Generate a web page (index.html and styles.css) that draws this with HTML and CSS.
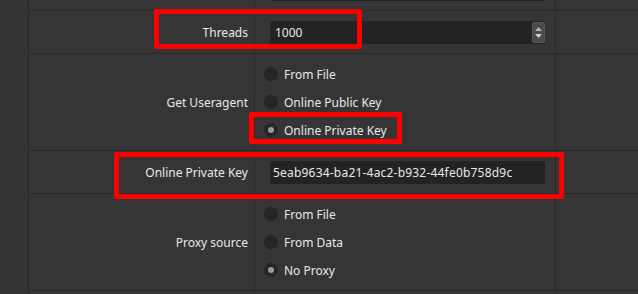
FILE: index.html
```html
<!DOCTYPE html>
<html>
<head>
<meta charset="utf-8">
<link rel="stylesheet" href="styles.css">
</head>
<body>
<div class="app">
  <div class="side"></div>
  <div class="table">
    <div class="row short first">
      <div class="label"></div>
      <div class="value"><div class="field"></div></div>
      <div class="extra"></div>
    </div>
    <div class="row short">
      <div class="label">Threads</div>
      <div class="value">
        <div class="field spin">
          <span class="text">1000</span>
          <div class="spinbtn">
            <svg width="13" height="21" viewBox="0 0 13 21">
              <path d="M3 9 L6.5 5 L10 9 Z" fill="#bcaebc"/>
              <path d="M3 12 L6.5 16 L10 12 Z" fill="#d2d2d2"/>
            </svg>
          </div>
        </div>
      </div>
      <div class="extra"></div>
    </div>
    <div class="row tall">
      <div class="label">Get Useragent</div>
      <div class="value">
        <div class="radios">
          <div class="radio"><span class="dot"></span><span>From File</span></div>
          <div class="radio"><span class="dot"></span><span>Online Public Key</span></div>
          <div class="radio"><span class="dot on"></span><span>Online Private Key</span></div>
        </div>
      </div>
      <div class="extra"></div>
    </div>
    <div class="row short">
      <div class="label">Online Private Key</div>
      <div class="value"><div class="field"><span class="text key">5eab9634-ba21-4ac2-b932-44fe0b758d9c</span></div></div>
      <div class="extra"></div>
    </div>
    <div class="row tall">
      <div class="label">Proxy source</div>
      <div class="value">
        <div class="radios">
          <div class="radio"><span class="dot"></span><span>From File</span></div>
          <div class="radio"><span class="dot"></span><span>From Data</span></div>
          <div class="radio"><span class="dot on"></span><span>No Proxy</span></div>
        </div>
      </div>
      <div class="extra"></div>
    </div>
    <div class="row short">
      <div class="label"></div>
      <div class="value"></div>
      <div class="extra"></div>
    </div>
  </div>
  <div class="mark mark-threads"></div>
  <div class="mark mark-radio"></div>
  <div class="mark mark-key"></div>
</div>
</body>
</html>
```
FILE: styles.css
```css
html, body {
  margin: 0;
  padding: 0;
  background: #353535;
  overflow: hidden;
}
.app {
  position: relative;
  width: 638px;
  height: 294px;
  display: flex;
  overflow: hidden;
  font-family: "Noto Sans", "Open Sans", sans-serif;
  font-size: 12px;
  color: #e8e8e8;
}
.side {
  width: 29px;
  flex: none;
  box-sizing: border-box;
  border-right: 1px solid #282828;
  background-color: #333333;
  background-image: radial-gradient(circle, #383838 0.6px, transparent 0.7px);
  background-size: 3px 3px;
}
.table {
  flex: 1;
  display: flex;
  flex-direction: column;
}
.row {
  display: grid;
  grid-template-columns: 226px 301px 1fr;
  box-sizing: border-box;
  border-bottom: 1px solid #2a2a2a;
  flex: none;
}
.row.first {
  margin-top: -32px;
}
.short { height: 43px; }
.tall { height: 97px; }
.label, .value {
  box-sizing: border-box;
  border-right: 1px solid #2a2a2a;
}
.label {
  display: flex;
  align-items: center;
  justify-content: flex-end;
  padding-right: 6px;
}
.value {
  display: flex;
  align-items: center;
}
.field {
  margin-left: 15px;
  width: 275px;
  height: 23px;
  background: #232323;
  border-radius: 3px;
  display: flex;
  align-items: center;
  box-sizing: border-box;
  padding-left: 3px;
}
.field .text {
  flex: 1;
}
.field .key {
  letter-spacing: 0.2px;
}
.spin {
  padding-left: 5px;
}
.spinbtn {
  width: 13px;
  height: 21px;
  box-sizing: border-box;
  border: 1px solid #5a5a5a;
  border-radius: 2px;
  background-color: #4a4a4a;
  background-image: radial-gradient(circle, #555 0.6px, transparent 0.7px);
  background-size: 2px 2px;
  display: flex;
}
.spinbtn svg {
  margin: -1px;
}
.radios {
  margin-left: 9px;
  display: flex;
  flex-direction: column;
}
.radio {
  height: 28px;
  display: flex;
  align-items: center;
}
.dot {
  width: 14px;
  height: 14px;
  border-radius: 50%;
  background: #262626;
  margin-right: 6px;
  display: flex;
  align-items: center;
  justify-content: center;
}
.dot.on::after {
  content: "";
  width: 6px;
  height: 6px;
  border-radius: 50%;
  background: #9a9a9a;
}
.mark {
  position: absolute;
  box-sizing: border-box;
  border: 5px solid #ff0000;
  border-radius: 2px;
}
.mark-threads {
  left: 154px;
  top: 9px;
  width: 208px;
  height: 40px;
}
.mark-radio {
  left: 249px;
  top: 112px;
  width: 153px;
  height: 32px;
}
.mark-key {
  left: 114px;
  top: 152px;
  width: 450px;
  height: 47px;
}
```
